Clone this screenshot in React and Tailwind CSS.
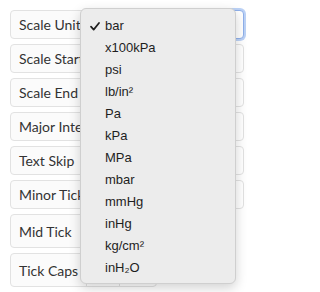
const rows = [
  { label: "Scale Unit", kind: "select" },
  { label: "Scale Start", kind: "input" },
  { label: "Scale End", kind: "input" },
  { label: "Major Interval", kind: "input" },
  { label: "Text Skip", kind: "input" },
  { label: "Minor Tick", kind: "input" },
  { label: "Mid Tick", kind: "check" },
  { label: "Tick Caps", kind: "buttons" },
];

const units = [
  "bar",
  "x100kPa",
  "psi",
  "lb/in²",
  "Pa",
  "kPa",
  "MPa",
  "mbar",
  "mmHg",
  "inHg",
  "kg/cm²",
  "inH₂O",
];

const Row = ({ label, kind }) => {
  const tall = kind === "check" || kind === "buttons";
  return (
    <div className={`flex ${tall ? "h-[34px]" : "h-[29px]"}`}>
      <div className="flex items-center rounded-l-[4px] border border-[#e2e2e2] bg-[#fbfbfb] px-[8px] text-[14px] text-[#333] whitespace-nowrap">
        {label}
      </div>
      {kind === "select" && (
        <div className="-ml-px flex-1 rounded-r-[4px] border border-[#8fb0ea] bg-white shadow-[0_0_0_2px_#bcd2f6]" />
      )}
      {kind === "input" && (
        <div className="-ml-px flex-1 rounded-r-[4px] border border-[#e2e2e2] bg-white" />
      )}
      {kind === "check" && (
        <div className="-ml-px w-[40px] rounded-r-[4px] border border-[#e2e2e2] bg-white" />
      )}
      {kind === "buttons" && (
        <div className="-ml-px flex">
          <div className="w-[34px] border border-[#e2e2e2] bg-white" />
          <div className="-ml-px w-[38px] rounded-r-[4px] border border-[#e2e2e2] bg-white" />
        </div>
      )}
    </div>
  );
};

export default function App() {
  return (
    <div className="relative h-[292px] w-[255px] overflow-hidden bg-white font-['Lato',sans-serif]">
      <div className="flex flex-col gap-[5px] pl-[10px] pr-[11px] pt-[10px]">
        {rows.map((row) => (
          <Row key={row.label} {...row} />
        ))}
      </div>

      {/* open unit dropdown */}
      <div className="absolute left-[80px] top-[8px] w-[156px] rounded-[6px] border border-[#cfcfcf] bg-[#ececec] pt-[6px] pb-[4px] font-['Liberation_Sans',Arial,sans-serif] text-[13px] text-[#1e1e1e] shadow-[0_4px_12px_rgba(0,0,0,0.18)]">
        {units.map((unit, index) => (
          <div key={unit} className="flex h-[22px] items-center">
            <span className="flex w-[24px] items-center pl-[9px]">
              {index === 0 && (
                <svg width="10" height="9" viewBox="0 0 10 9" fill="none">
                  <polyline
                    points="1,4.6 3.7,7.6 9,1"
                    stroke="#1e1e1e"
                    strokeWidth="1.7"
                    strokeLinecap="round"
                    strokeLinejoin="round"
                  />
                </svg>
              )}
            </span>
            <span>{unit}</span>
          </div>
        ))}
      </div>
    </div>
  );
}
